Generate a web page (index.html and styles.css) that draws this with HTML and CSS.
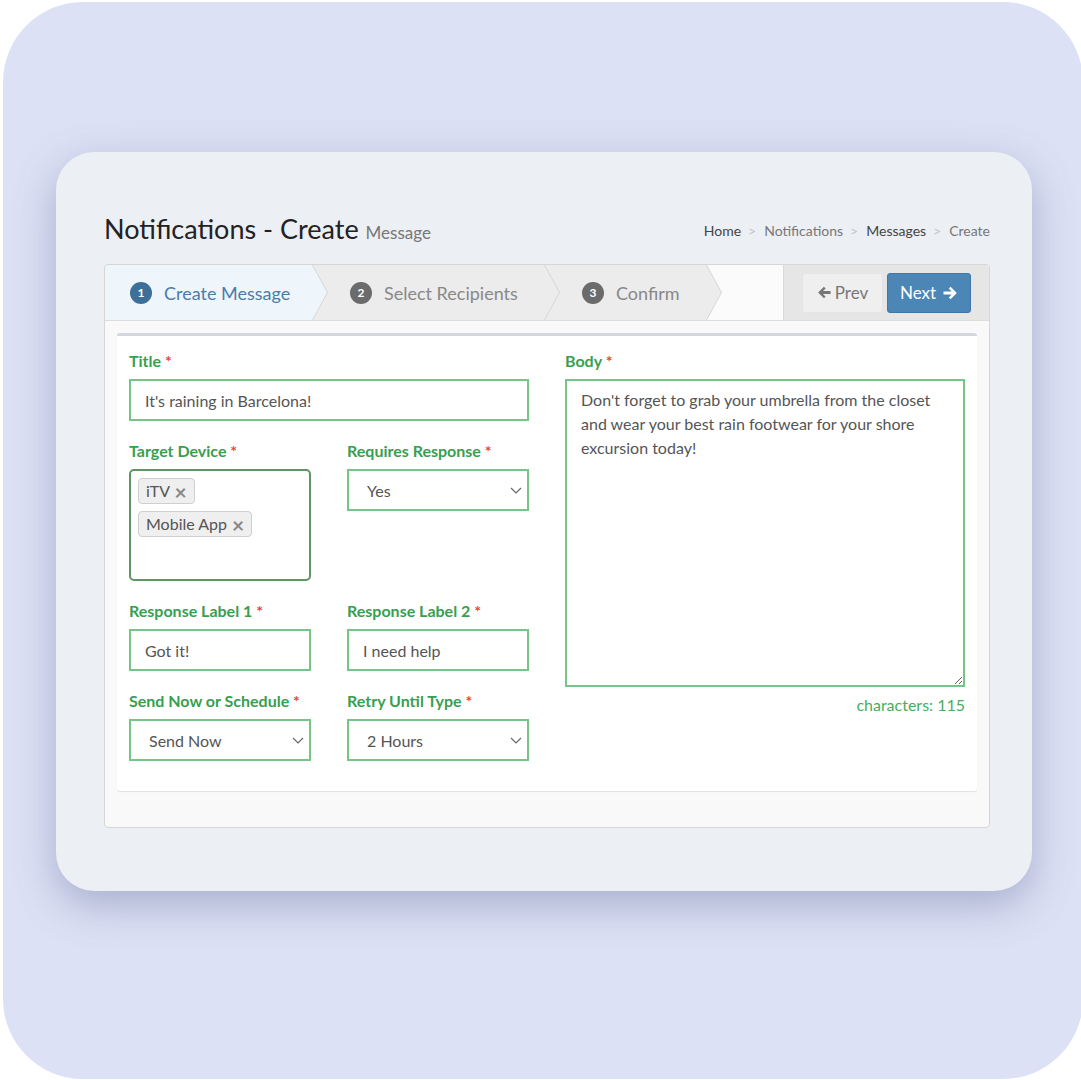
FILE: index.html
```html
<!DOCTYPE html>
<html lang="en">
<head>
    <meta charset="UTF-8">
    <meta name="viewport" content="width=device-width, initial-scale=1.0">
    <title>Notifications - Create</title>
    <link rel="stylesheet" href="styles.css">
</head>
<body>
    <div class="frame">
        <div class="card">
            <div class="page-head">
                <h1>Notifications - Create <small>Message</small></h1>
                <ol class="crumbs">
                    <li class="dark">Home</li>
                    <li>Notifications</li>
                    <li class="dark">Messages</li>
                    <li>Create</li>
                </ol>
            </div>

            <div class="wizard">
                <div class="steps">
                    <div class="step step-1 active"><span class="num">1</span>Create Message</div>
                    <div class="step step-2"><span class="num">2</span>Select Recipients</div>
                    <div class="step step-3"><span class="num">3</span>Confirm</div>
                    <div class="spacer"></div>
                    <div class="actions">
                        <button class="btn">
                            <svg width="15" height="15" viewBox="0 0 16 16"><path d="M14.5 6.4H6.4l2.8-2.8L7.4 1.8 1.2 8l6.2 6.2 1.8-1.8-2.8-2.8h8.1z" fill="#777"/></svg>Prev
                        </button>
                        <button class="btn btn-primary">
                            Next<svg width="16" height="16" viewBox="0 0 16 16"><path d="M1.5 6.4h8.1L6.8 3.6l1.8-1.8L14.8 8l-6.2 6.2-1.8-1.8 2.8-2.8H1.5z" fill="#fff"/></svg>
                        </button>
                    </div>
                </div>

                <div class="wizard-body">
                    <div class="box">
                        <div class="col">
                            <div class="group">
                                <label>Title <span class="req">*</span></label>
                                <div class="input">It's raining in Barcelona!</div>
                            </div>
                            <div class="pair">
                                <div class="group">
                                    <label>Target Device <span class="req">*</span></label>
                                    <div class="tags">
                                        <span class="tag">iTV <b>&times;</b></span>
                                        <span class="tag">Mobile App <b>&times;</b></span>
                                    </div>
                                </div>
                                <div class="group">
                                    <label>Requires Response <span class="req">*</span></label>
                                    <div class="input select">Yes</div>
                                </div>
                                <div class="group">
                                    <label>Response Label 1 <span class="req">*</span></label>
                                    <div class="input">Got it!</div>
                                </div>
                                <div class="group">
                                    <label>Response Label 2 <span class="req">*</span></label>
                                    <div class="input">I need help</div>
                                </div>
                                <div class="group">
                                    <label>Send Now or Schedule <span class="req">*</span></label>
                                    <div class="input select">Send Now</div>
                                </div>
                                <div class="group">
                                    <label>Retry Until Type <span class="req">*</span></label>
                                    <div class="input select">2 Hours</div>
                                </div>
                            </div>
                        </div>
                        <div class="col">
                            <div class="group">
                                <label>Body <span class="req">*</span></label>
                                <textarea class="input textarea">Don't forget to grab your umbrella from the closet and wear your best rain footwear for your shore excursion today!</textarea>
                                <div class="counter">characters: 115</div>
                            </div>
                        </div>
                    </div>
                </div>
            </div>
        </div>
    </div>
</body>
</html>
```

FILE: styles.css
```css
body {
    margin: 0;
    background: #fff;
    font-family: 'Lato', 'Noto Sans', sans-serif;
    color: #333;
}
.frame {
    margin: 2px 0 0 3px;
    width: 1080px;
    height: 1077px;
    box-sizing: border-box;
    padding: 150px 0 0 53px;
    background: #dce1f5;
    border-radius: 80px;
}
.card {
    width: 976px;
    height: 739px;
    box-sizing: border-box;
    padding: 57px 42px 0 48px;
    background: #eceff4;
    border-radius: 38px;
    box-shadow: 0 14px 42px rgba(95, 105, 150, 0.42);
}
.page-head {
    display: flex;
    justify-content: space-between;
    align-items: flex-start;
    height: 55px;
}
h1 {
    margin: 0;
    font-size: 27px;
    font-weight: 400;
    color: #222;
    line-height: 40px;
}
h1 small {
    font-size: 17px;
    color: #777;
}
.crumbs {
    display: flex;
    margin: 13px 0 0;
    padding: 0;
    list-style: none;
    font-size: 14px;
    color: #777;
}
.crumbs li + li::before {
    content: '>';
    color: #c4c4c4;
    padding: 0 8px 0 7px;
}
.crumbs .dark {
    color: #444;
}
.wizard {
    width: 886px;
    box-sizing: border-box;
    border: 1px solid #d6d6d6;
    border-radius: 4px;
    background: #f9f9f9;
}
.steps {
    display: flex;
    height: 55px;
    border-bottom: 1px solid #dcdcdc;
    background: #fbfbfb;
    border-radius: 4px 4px 0 0;
    overflow: hidden;
}
.step {
    position: relative;
    display: flex;
    align-items: center;
    box-sizing: border-box;
    margin-right: -15px;
    padding-left: 37px;
    font-size: 18px;
    color: #888;
}
.step::before,
.step::after {
    content: '';
    position: absolute;
    top: 0;
    bottom: 0;
    left: 0;
    z-index: -1;
    clip-path: polygon(0 0, calc(100% - 15px) 0, 100% 50%, calc(100% - 15px) 100%, 0 100%);
}
.step::before {
    right: 0;
    background: #d6d6d6;
}
.step::after {
    right: 1px;
    background: #ececec;
}
.step-1 {
    width: 223px;
    padding-left: 25px;
    z-index: 3;
}
.step-2 {
    width: 247px;
    z-index: 2;
}
.step-3 {
    width: 177px;
    z-index: 1;
}
.step.active {
    color: #4a7ca8;
}
.step.active::after {
    background: #eef6fb;
}
.num {
    display: inline-flex;
    justify-content: center;
    align-items: center;
    width: 22px;
    height: 22px;
    margin-right: 12px;
    border-radius: 50%;
    background: #6b6b6b;
    color: #fff;
    font-size: 12px;
    font-weight: 700;
}
.active .num {
    background: #3d6f98;
}
.spacer {
    flex: 1;
}
.actions {
    display: flex;
    align-items: center;
    gap: 4px;
    padding: 0 18px 0 18px;
    background: #e6e6e6;
    border-left: 1px solid #dadada;
}
.btn {
    display: flex;
    align-items: center;
    gap: 3px;
    width: 81px;
    height: 40px;
    justify-content: center;
    padding: 0;
    border: 1px solid #e4e4e4;
    border-radius: 3px;
    background: #efefef;
    color: #777;
    font-family: inherit;
    font-size: 17px;
}
.btn-primary {
    width: 84px;
    gap: 6px;
    background: #4b86b7;
    border-color: #3f78a8;
    color: #fff;
}
.wizard-body {
    padding: 12px 12px 36px;
}
.box {
    display: flex;
    gap: 36px;
    padding: 15px 12px 10px;
    background: #fff;
    border-top: 3px solid #d2d6de;
    border-radius: 3px;
    box-shadow: 0 1px 1px rgba(0, 0, 0, 0.1);
}
.col {
    width: 400px;
}
.pair {
    display: grid;
    grid-template-columns: 182px 182px;
    column-gap: 36px;
}
.group {
    margin-bottom: 20px;
}
label {
    display: block;
    margin-bottom: 8px;
    line-height: 20px;
    font-size: 16px;
    font-weight: 700;
    color: #37a04f;
}
.req {
    color: #dd4b39;
}
.input {
    display: flex;
    align-items: center;
    box-sizing: border-box;
    width: 100%;
    height: 42px;
    padding: 0 14px;
    border: 2px solid #76c486;
    background: #fff;
    font-family: inherit;
    font-size: 16px;
    color: #555;
}
.select {
    padding-left: 18px;
    background: #fff url("data:image/svg+xml,%3Csvg xmlns='http://www.w3.org/2000/svg' width='12' height='7' viewBox='0 0 12 7'%3E%3Cpath d='M1 1l5 5 5-5' fill='none' stroke='%23666' stroke-width='1.2'/%3E%3C/svg%3E") no-repeat right 5px center;
}
.tags {
    box-sizing: border-box;
    height: 112px;
    padding: 7px 7px;
    border: 2px solid #5f9563;
    border-radius: 5px;
}
.tag {
    display: table;
    margin-bottom: 7px;
    padding: 2px 7px;
    border: 1px solid #cfcfcf;
    border-radius: 4px;
    background: #efefef;
    font-size: 16px;
    line-height: 20px;
    color: #555;
}
.tag b {
    display: inline-block;
    margin-left: 1px;
    color: #888;
    font-size: 21px;
    line-height: 16px;
    vertical-align: -3px;
}
.textarea {
    display: block;
    height: 308px;
    padding: 7px 14px;
    line-height: 24px;
    resize: vertical;
    outline: none;
}
.counter {
    margin-top: 8px;
    text-align: right;
    font-size: 16px;
    color: #47ad60;
}
```
